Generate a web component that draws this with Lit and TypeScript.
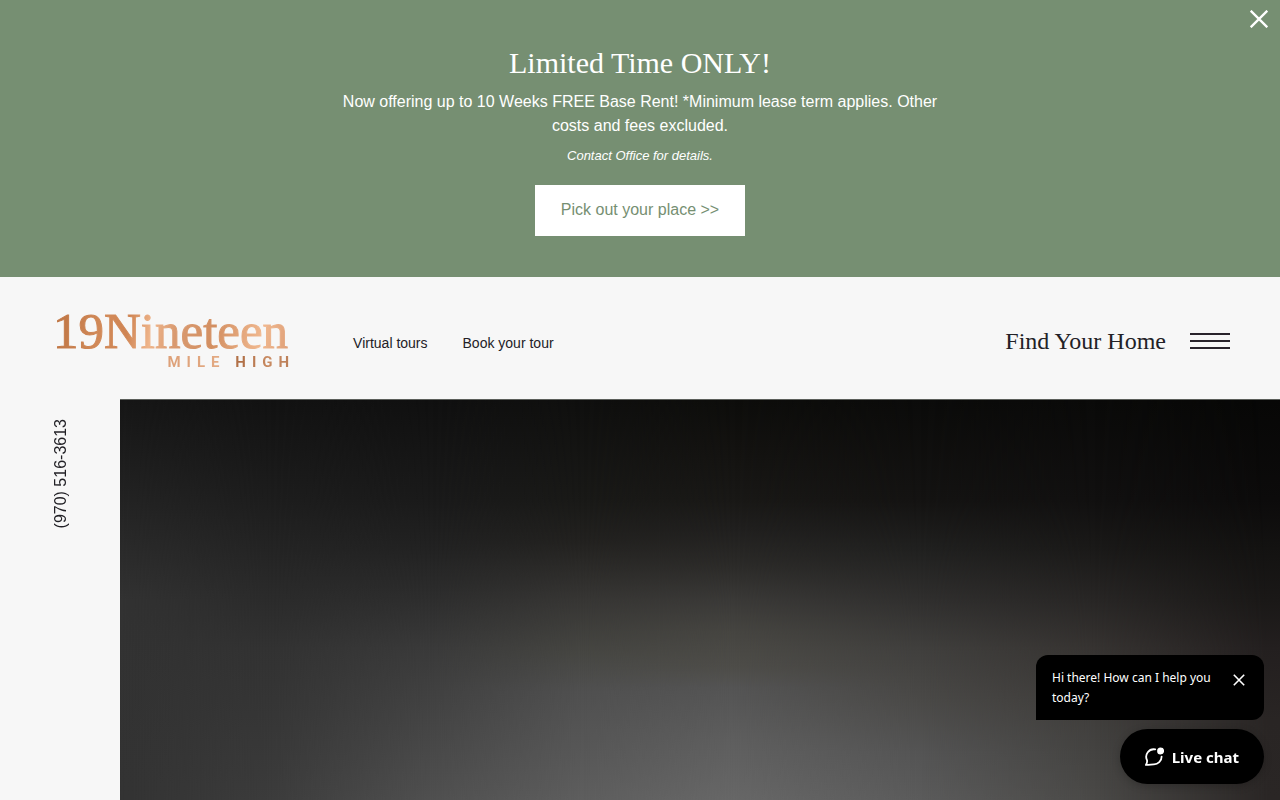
import { LitElement, html, css } from "lit";
import { customElement } from "lit/decorators.js";
import { styleMap } from "lit/directives/style-map.js";

@customElement("promo-banner")
class PromoBanner extends LitElement {
  static styles = css`
    :host {
      display: block;
      position: relative;
      background: #768f72;
      color: #fff;
      text-align: center;
      padding: 43px 24px 41px;
      font-family: "Liberation Sans", Arial, sans-serif;
    }
    .title {
      margin: 0 0 8px;
      font: 400 30px/39px "Liberation Serif", "Times New Roman", serif;
    }
    .text {
      max-width: 600px;
      margin: 0 auto 8px;
      font-size: 16px;
      line-height: 24px;
    }
    .note {
      margin: 0 0 19px;
      font-size: 13px;
      line-height: 20px;
      font-style: italic;
    }
    .cta {
      display: inline-block;
      vertical-align: top;
      background: #fff;
      color: #768f72;
      text-decoration: none;
      font-size: 16px;
      line-height: 19px;
      padding: 15px 26px 17px;
    }
    .close {
      position: absolute;
      top: 10px;
      right: 12px;
      display: flex;
      padding: 0;
      border: 0;
      background: none;
      color: inherit;
      cursor: pointer;
    }
  `;
  render() {
    return html`
      <h2 class="title">Limited Time ONLY!</h2>
      <p class="text">
        Now offering up to 10 Weeks FREE Base Rent! *Minimum lease term applies.
        Other costs and fees excluded.
      </p>
      <p class="note">Contact Office for details.</p>
      <a class="cta" href="#floorplans">Pick out your place &gt;&gt;</a>
      <button class="close" aria-label="Close banner">
        <svg width="18" height="18" viewBox="0 0 18 18" stroke="currentColor" stroke-width="2.3">
          <path d="M.7.7 17.3 17.3M17.3.7.7 17.3" />
        </svg>
      </button>
    `;
  }
}

@customElement("site-header")
class SiteHeader extends LitElement {
  static styles = css`
    :host {
      display: flex;
      align-items: center;
      min-height: 122px;
      padding: 0 50px 0 53px;
      box-sizing: border-box;
      color: #222126;
      font-family: "Liberation Sans", Arial, sans-serif;
    }
    a {
      color: inherit;
      text-decoration: none;
    }
    .logo {
      display: flex;
      flex-direction: column;
      align-items: flex-end;
      color: transparent;
      margin-right: 65px;
      padding-top: 2px;
    }
    .name {
      font: 400 51px/46px "Liberation Serif", "Times New Roman", serif;
      -webkit-text-stroke: 1px transparent;
      background: linear-gradient(100deg, #bd7341 0, #d28a59 22%, #cf8452 32%, #efb58b 42%, #d99a70 52%, #d38f61 68%, #f0b88f 88%, #dfa078 100%);
      background-clip: text;
      -webkit-background-clip: text;
    }
    .place {
      font: 700 15px/16px Roboto, sans-serif;
      letter-spacing: 6px;
      margin-right: -7px;
      background: linear-gradient(90deg, #dda078 0, #e3aa83 45%, #ad6c43 56%, #c98b62 80%, #b87c56 100%);
      background-clip: text;
      -webkit-background-clip: text;
    }
    .nav {
      display: flex;
      gap: 35px;
      font-size: 14px;
      line-height: 20px;
      padding-top: 10px;
    }
    .home {
      margin-left: auto;
      font: 24px/28px "Liberation Serif", "Times New Roman", serif;
      padding-top: 6px;
    }
    .menu {
      display: flex;
      flex-direction: column;
      gap: 5px;
      width: 40px;
      margin-left: 24px;
      padding: 6px 0 0;
      border: 0;
      background: none;
      cursor: pointer;
    }
    .bar {
      height: 2px;
      background: #29232b;
    }
  `;
  render() {
    return html`
      <a class="logo" href="#home">
        <span class="name">19Nineteen</span>
        <span class="place">MILE HIGH</span>
      </a>
      <nav class="nav">
        <a href="#tours">Virtual tours</a>
        <a href="#book">Book your tour</a>
      </nav>
      <a class="home" href="#find">Find Your Home</a>
      <button class="menu" aria-label="Open menu">
        <span class="bar"></span><span class="bar"></span><span class="bar"></span>
      </button>
    `;
  }
}

@customElement("chat-widget")
class ChatWidget extends LitElement {
  static styles = css`
    :host {
      position: fixed;
      right: 16px;
      bottom: 16px;
      display: flex;
      flex-direction: column;
      align-items: flex-end;
      gap: 9px;
      color: #fff;
      font-family: "Noto Sans", "Open Sans", sans-serif;
    }
    .bubble {
      display: flex;
      align-items: flex-start;
      gap: 8px;
      width: 228px;
      box-sizing: border-box;
      padding: 13px 19px 12px 16px;
      border-radius: 12px 12px 12px 0;
      background: #000;
    }
    .message {
      flex: 1;
      margin: 0;
      font-size: 12px;
      line-height: 20px;
    }
    button {
      font-family: inherit;
      color: inherit;
      border: 0;
      cursor: pointer;
    }
    .dismiss {
      display: flex;
      padding: 0;
      margin-top: 6px;
      background: none;
    }
    .open {
      display: flex;
      align-items: center;
      gap: 8px;
      height: 55px;
      padding: 0 25px 0 24px;
      border-radius: 28px;
      background: #000;
      font-size: 15px;
      font-weight: 700;
      line-height: 20px;
      box-shadow: 0 2px 8px rgba(0, 0, 0, 0.2);
    }
  `;
  render() {
    return html`
      <div class="bubble">
        <p class="message">Hi there! How can I help you today?</p>
        <button class="dismiss" aria-label="Dismiss message">
          <svg width="12" height="12" viewBox="0 0 12 12" stroke="currentColor" stroke-width="1.6">
            <path d="M.8.8 11.2 11.2M11.2.8.8 11.2" />
          </svg>
        </button>
      </div>
      <button class="open">
        <svg width="20" height="20" viewBox="0 0 20 20" fill="none">
          <path
            d="M11.2 2.4A7.6 7.6 0 0 0 3 13.2C3.4 14.7 2.8 16.4 1.9 17.9 4 18 7.4 17.5 9.6 17.4A7.7 7.7 0 0 0 17.6 9.6"
            stroke="currentColor" stroke-width="1.8" stroke-linecap="round" stroke-linejoin="round"
          />
          <circle cx="16.6" cy="3.9" r="3.5" fill="currentColor" />
        </svg>
        Live chat
      </button>
    `;
  }
}

/** Vertical shades of the backdrop; each column fades in from the one before it. */
const shades: { at: number; stops: string }[] = [
  { at: 0, stops: "#161616 0, #232323 25%, #323232 50%, #333 100%" },
  { at: 13, stops: "#121212 0, #1d1d1d 25%, #2b2b2b 50%, #323232 62%, #353535 75%, #3c3c3c 100%" },
  { at: 27, stops: "#101010 0, #1a1a1a 25%, #222 37%, #2e2e2e 50%, #3a3a3a 62%, #424242 75%, #505050 100%" },
  { at: 40, stops: "#0f0f0e 0, #191917 25%, #22211f 35%, #373634 50%, #464642 63%, #505050 73%, #5e5e5e 100%" },
  { at: 53, stops: "#0d0d0b 0, #131210 12%, #191816 25%, #201f1e 32%, #2b2a28 41%, #3a3937 50%, #464541 58%, #4e4d49 67%, #545454 72%, #5e5e5e 85%, #676767 100%" },
  { at: 69, stops: "#0b0b0a 0, #141312 25%, #20201f 37%, #302f2e 50%, #403f3d 62%, #4a4947 75%, #545454 88%, #5b5b5b 100%" },
  { at: 84, stops: "#0a0a09 0, #111010 25%, #1a1918 37%, #282625 50%, #363331 62%, #3e3c3a 75%, #444341 88%, #4a4947 100%" },
  { at: 99, stops: "#070706 0, #0c0b0b 25%, #131211 37%, #1a1817 50%, #231f1f 62%, #292524 80%, #2a2625 100%" },
];

@customElement("hero-backdrop")
class HeroBackdrop extends LitElement {
  static styles = css`
    :host {
      display: grid;
      min-height: 400px;
      border-top: 1px solid #5c5f5b;
      background: #333;
    }
    .shade {
      grid-area: 1 / 1;
    }
  `;
  render() {
    return shades.map(({ at, stops }, i) => {
      const mask = i
        ? `linear-gradient(90deg, transparent ${shades[i - 1].at}%, #000 ${at}%)`
        : "none";
      return html`<div
        class="shade"
        style=${styleMap({
          backgroundImage: `linear-gradient(180deg, ${stops})`,
          maskImage: mask,
        })}
      ></div>`;
    });
  }
}

@customElement("app-root")
class AppRoot extends LitElement {
  static styles = css`
    :host {
      display: flex;
      flex-direction: column;
      min-height: 100vh;
      background: #f7f7f7;
    }
    .main {
      flex: 1;
      display: grid;
      grid-template-columns: 120px 1fr;
    }
    .side {
      display: flex;
      justify-content: center;
      align-items: flex-start;
      padding: 20px 0 0 2px;
    }
    .phone {
      writing-mode: vertical-rl;
      transform: rotate(180deg);
      color: #222126;
      text-decoration: none;
      font: 16px/20px "Liberation Sans", Arial, sans-serif;
    }
  `;
  render() {
    return html`
      <promo-banner></promo-banner>
      <site-header></site-header>
      <main class="main">
        <aside class="side"><a class="phone" href="tel:9705163613">(970) 516-3613</a></aside>
        <hero-backdrop></hero-backdrop>
      </main>
      <chat-widget></chat-widget>
    `;
  }
}
